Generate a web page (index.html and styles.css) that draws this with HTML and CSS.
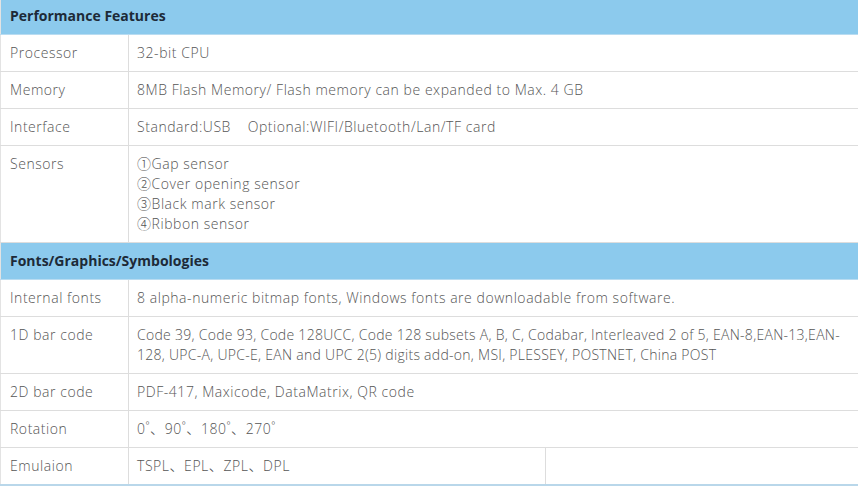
FILE: index.html
```html
<!DOCTYPE html>
<html>

<head>
	<title>
		Specifications
	</title>

	<link rel="stylesheet" href="styles.css">

</head>

<body>
	<div class="page">
		<table class="spec">
			<colgroup>
				<col class="col-name">
				<col class="col-value">
				<col class="col-extra">
			</colgroup>
			<tr class="group">
				<th colspan="3">Performance Features</th>
			</tr>
			<tr>
				<td>Processor</td>
				<td colspan="2">32-bit CPU</td>
			</tr>
			<tr>
				<td>Memory</td>
				<td colspan="2">8MB Flash Memory/ Flash memory can be expanded to Max. 4 GB</td>
			</tr>
			<tr>
				<td>Interface</td>
				<td colspan="2">Standard:USB&nbsp;&nbsp;&nbsp;&nbsp;Optional:WIFI/Bluetooth/Lan/TF card</td>
			</tr>
			<tr>
				<td>Sensors</td>
				<td colspan="2">①Gap sensor<br>②Cover opening sensor<br>③Black mark sensor<br>④Ribbon sensor</td>
			</tr>
			<tr class="group">
				<th colspan="3">Fonts/Graphics/Symbologies</th>
			</tr>
			<tr>
				<td>Internal fonts</td>
				<td colspan="2">8 alpha-numeric bitmap fonts, Windows fonts are downloadable from software.</td>
			</tr>
			<tr>
				<td>1D bar code</td>
				<td colspan="2" class="long">Code 39, Code 93, Code 128UCC, Code 128 subsets A, B, C, Codabar, Interleaved 2 of 5, EAN-8,EAN-13,EAN-128, UPC-A, UPC-E, EAN and UPC 2(5) digits add-on, MSI, PLESSEY, POSTNET, China POST</td>
			</tr>
			<tr>
				<td>2D bar code</td>
				<td colspan="2">PDF-417, Maxicode, DataMatrix, QR code</td>
			</tr>
			<tr>
				<td>Rotation</td>
				<td colspan="2">0˚、90˚、180˚、270˚</td>
			</tr>
			<tr class="last">
				<td>Emulaion</td>
				<td>TSPL、EPL、ZPL、DPL</td>
				<td></td>
			</tr>
		</table>
	</div>
</body>

</html>
```

FILE: styles.css
```css
body {
	margin: 0;
	background: #ffffff;
	font-family: "Open Sans", "Noto Sans CJK SC", sans-serif;
}

.page {
	width: 862px;
	height: 486px;
	overflow: hidden;
}

.spec {
	width: 858px;
	margin-top: -2px;
	border-collapse: collapse;
	table-layout: fixed;
	border-left: 1px solid #e3e3e3;
	font-size: 14px;
	line-height: 20px;
	color: #555555;
}

.col-name {
	width: 128px;
}

.col-value {
	width: 417px;
}

.spec th {
	background-color: #8ccaed;
	color: #1d2a38;
	font-weight: 700;
	text-align: left;
	padding: 8px 9px;
	border-bottom: 1px solid #b9dcf1;
}

.spec td {
	padding: 8px 4px 8px 8px;
	vertical-align: top;
	font-weight: 300;
	letter-spacing: 0.55px;
	border-bottom: 1px solid #dddddd;
	border-right: 1px solid #dddddd;
}

.spec td.long {
	letter-spacing: 0.28px;
}

.spec td:first-child {
	padding-left: 9px;
}

.spec td:last-child {
	border-right: none;
}

.spec .last td {
	border-bottom: 2px solid #b9d7ea;
}

.spec .last td:nth-child(2) {
	border-right: 1px solid #dddddd;
}
```
